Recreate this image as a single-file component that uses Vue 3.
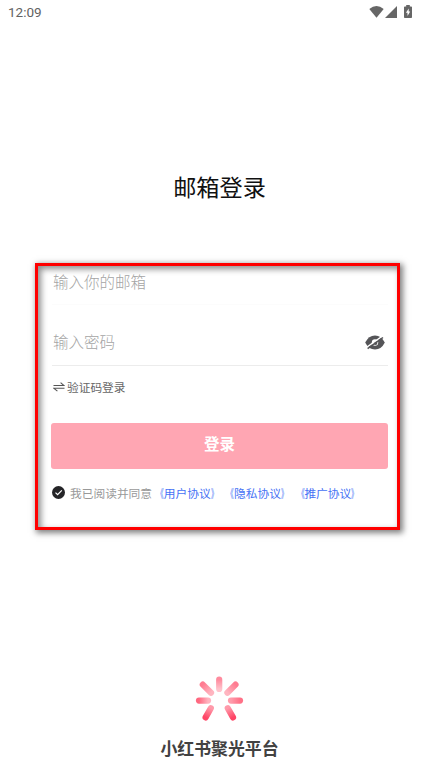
<script setup>
import { ref } from 'vue'

const email = ref('')
const password = ref('')
const agreements = ['用户协议', '隐私协议', '推广协议']
const petals = [
  { x1: 34.2, y1: 14.7, x2: 34.2, y2: 24, from: '#ff8b9e', to: '#ffc3cc' },
  { x1: 17.8, y1: 19.6, x2: 26, y2: 27.7, from: '#ff7c91', to: '#ffb5c0' },
  { x1: 50.5, y1: 19.6, x2: 42.4, y2: 27.7, from: '#ff7c91', to: '#ffb5c0' },
  { x1: 14, y1: 35.6, x2: 23, y2: 35.6, from: '#ff6880', to: '#ffb3bf' },
  { x1: 55, y1: 35.6, x2: 46, y2: 35.6, from: '#ff7187', to: '#ff9bab' },
  { x1: 20.6, y1: 52.4, x2: 25.8, y2: 43.2, from: '#ff4566', to: '#ff9aaa' },
  { x1: 48, y1: 52.4, x2: 42.8, y2: 43.2, from: '#ff4566', to: '#ff9aaa' },
]
</script>

<template>
  <main class="screen">
    <header class="status">
      <span class="time">12:09</span>
      <svg class="wifi" width="15" height="12" viewBox="0 0 15 12"><path d="M.3 3Q7.5-2.8 14.7 3L7.5 11.8Z" /></svg>
      <svg class="signal" width="12" height="12" viewBox="0 0 12 12"><path d="M12 0V12H0Z" /></svg>
      <svg class="battery" width="8" height="13" viewBox="0 0 8 13">
        <path d="M2.2 0H5.8V1.4H7.2Q8 1.4 8 2.2V12.2Q8 13 7.2 13H.8Q0 13 0 12.2V2.2Q0 1.4.8 1.4H2.2Z" />
        <path class="bolt" d="M4.7 3.5V6.4H6.2L3.5 11V7.7H1.9Z" />
      </svg>
    </header>

    <h1>邮箱登录</h1>

    <section class="panel">
      <div class="field email"><input v-model="email" type="text" placeholder="输入你的邮箱" /></div>
      <div class="field password">
        <input v-model="password" type="password" placeholder="输入密码" />
        <svg width="20" height="15" viewBox="0 0 20 15">
          <path d="M.2 7.5Q3.6.5 10 .5T19.8 7.5Q16.4 14.5 10 14.5T.2 7.5Z" fill="#555558" />
          <circle cx="10" cy="7.5" r="3.2" fill="#fff" />
          <circle cx="10.5" cy="8" r="1.9" fill="#555558" />
          <path d="M1.6 12.4 16.6 1.6" stroke="#fff" stroke-width="1.3" />
          <path d="M2.6 13.6 18 2.5" stroke="#555558" stroke-width="1.5" />
        </svg>
      </div>
      <div class="switch">
        <svg width="12" height="10" viewBox="0 0 12 10"><path d="M.5 3.5H11L7.6.6M11.5 6.3H1L4.4 9.2" /></svg>
        <span>验证码登录</span>
      </div>
      <button>登录</button>
      <div class="agreement">
        <svg width="13" height="13" viewBox="0 0 13 13">
          <circle cx="6.5" cy="6.5" r="6.5" fill="#242427" />
          <path d="M3.5 6.6 5.6 8.7 9.8 4.4" fill="none" stroke="#fff" stroke-width="1.2" />
        </svg>
        <span>我已阅读并同意</span><a v-for="item in agreements" :key="item"><i class="open">《</i>{{ item }}<i class="close">》</i></a>
      </div>
    </section>

    <footer>
      <svg width="70" height="65" viewBox="0 0 70 65">
        <defs>
          <linearGradient v-for="(p, i) in petals" :id="`petal${i}`" :key="i" gradientUnits="userSpaceOnUse" :x1="p.x1" :y1="p.y1" :x2="p.x2" :y2="p.y2">
            <stop offset="0" :stop-color="p.from" /><stop offset="1" :stop-color="p.to" />
          </linearGradient>
        </defs>
        <line v-for="(p, i) in petals" :key="i" :x1="p.x1" :y1="p.y1" :x2="p.x2" :y2="p.y2" :stroke="`url(#petal${i})`" stroke-width="6.2" stroke-linecap="round" />
      </svg>
      <strong>小红书聚光平台</strong>
    </footer>
  </main>
</template>

<style>
body { background: #fff; }
</style>

<style scoped>
* { box-sizing: border-box; }
.screen { width: 439px; height: 780px; overflow: hidden; background: #fff; font-family: "Noto Sans CJK SC", sans-serif; display: flex; flex-direction: column; }
.status { height: 24px; padding: 0 27px 0 8px; display: flex; align-items: center; flex: none; }
.time { font: 13.5px/24px Roboto, sans-serif; color: #626262; margin-right: auto; }
.status svg { fill: #666; margin-bottom: 1px; }
.signal { margin-left: 1px; }
.battery { margin-left: 7px; }
.status .bolt { fill: #fff; }
h1 { margin: 145px 0 0; height: 34px; line-height: 34px; text-align: center; font-size: 23.2px; font-weight: 400; color: #111; }
.panel { margin: 60px 0 0 35px; width: 365px; height: 267px; flex: none; border: 3px solid #f00; padding: 0 9px 0 14px; box-shadow: 2px 2px 6px 1px rgba(0,0,0,.5), inset 3px 3px 6px rgba(0,0,0,.45); }
.field { display: flex; align-items: center; justify-content: space-between; padding: 0 3px 0 1px; }
.email { height: 39px; padding-bottom: 9px; border-bottom: 1px solid #fcfcfc; }
.password { height: 61px; padding-top: 14px; border-bottom: 1px solid #ececec; }
input { width: 250px; height: 30px; padding: 0 0 2px; border: 0; outline: 0; background: transparent; font: 300 15.5px/28px "Noto Sans CJK SC", sans-serif; }
.email input { padding-bottom: 0; }
input::placeholder { color: #a4a4a4; opacity: 1; }
.switch { height: 57px; padding: 0 0 16px 1px; display: flex; align-items: center; gap: 2px; font-size: 11.7px; color: #666; }
.switch svg { fill: none; stroke: #555; stroke-width: 1.1; }
button { display: block; width: 337px; height: 46px; margin-left: -1px; padding: 0 0 7px; border: 0; border-radius: 3px; background: #ffa6b3; color: #fff; font: 700 15.5px/36px "Noto Sans CJK SC", sans-serif; }
.agreement { display: flex; align-items: center; height: 20px; margin-top: 13px; font-size: 11.72px; color: #999; white-space: nowrap; }
.agreement svg { margin-right: 5px; flex: none; }
.agreement a { color: #4672f5; }
.agreement i { display: inline-block; width: 1em; font-style: normal; }
.open { transform: scaleX(.62); transform-origin: right; }
.close { transform: scaleX(.55); transform-origin: left; }
footer { margin-top: 135px; display: flex; flex-direction: column; align-items: center; }
strong { font-size: 16.9px; line-height: 24px; margin-top: 6px; color: #424242; font-weight: 700; }
</style>
